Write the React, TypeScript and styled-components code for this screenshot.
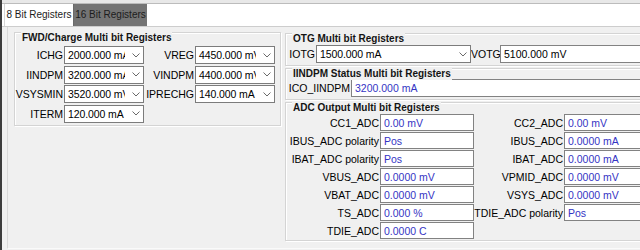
import { Fragment } from 'react';
import styled, { createGlobalStyle } from 'styled-components';

// --- Estilos ---
const GlobalStyle = createGlobalStyle`
  html, body {
    margin: 0;
    padding: 0;
    background: #f0f0f0;
  }
  body {
    font-family: "Liberation Sans", Arial, sans-serif;
  }
`;

const Window = styled.div`
  width: 640px;
  height: 250px;
  overflow: hidden;
  box-sizing: border-box;
  border-left: 2px solid #3c3c3c;
  background: #f0f0f0;
`;

const TopBar = styled.div`
  height: 3px;
  background: #e8e8e8;
  border-bottom: 1px solid #bcbcbc;
`;

const TabStrip = styled.div`
  display: flex;
  height: 22px;
  padding-left: 2px;
  background: #fff;
  border-bottom: 1px solid #cdcdcd;
`;

const Tab = styled.div<{ $dark?: boolean }>`
  width: ${({ $dark }) => ($dark ? '74px' : '69px')};
  box-sizing: border-box;
  border-left: 1px solid ${({ $dark }) => ($dark ? '#6a6a6a' : '#d6d6d6')};
  background: ${({ $dark }) => ($dark ? '#747474' : '#fff')};
  color: #1c1c1c;
  font-size: 10px;
  line-height: 22px;
  text-align: center;
  white-space: nowrap;
`;

const TabPage = styled.div`
  margin-left: 5px;
  height: 222px;
  box-sizing: border-box;
  border-left: 1px solid #d9d9d9;
  border-bottom: 1px solid #fafafa;
  padding: 5px 0 0 6px;
`;

const Columns = styled.div`
  display: flex;
  align-items: flex-start;
  gap: 4px;
`;

const RightColumn = styled.div`
  display: flex;
  flex-direction: column;
  gap: 2px;
  width: 374px;
  flex-shrink: 0;
  margin-top: 1px;
`;

const Group = styled.div<{ $width?: number; $pt: number; $pb: number }>`
  position: relative;
  flex-shrink: 0;
  width: ${({ $width }) => ($width ? `${$width}px` : 'auto')};
  box-sizing: border-box;
  border: 1px solid #d4d4d4;
  box-shadow: inset 1px 1px 0 #fff, 1px 1px 0 #fff;
  padding: ${({ $pt, $pb }) => `${$pt}px 0 ${$pb}px 0`};
`;

const GroupTitle = styled.div`
  position: absolute;
  top: -1px;
  left: 6px;
  padding: 0 1px;
  background: #f0f0f0;
  font-size: 10px;
  font-weight: bold;
  line-height: 12px;
  color: #141414;
  white-space: nowrap;
`;

const FieldGrid = styled.div<{ $cols: string; $rowGap: number; $rowH: number }>`
  display: grid;
  grid-template-columns: ${({ $cols }) => $cols};
  grid-auto-rows: ${({ $rowH }) => $rowH}px;
  row-gap: ${({ $rowGap }) => $rowGap}px;
`;

const Label = styled.div`
  text-align: right;
  padding-right: 1px;
  font-size: 10.5px;
  line-height: 18px;
  color: #000;
  white-space: nowrap;
  overflow: hidden;
`;

const Combo = styled.div`
  display: flex;
  align-items: center;
  box-sizing: border-box;
  border: 1px solid #7c7c7c;
  background: #fff;
  min-width: 0;
`;

const ComboText = styled.span`
  flex: 1;
  min-width: 0;
  overflow: hidden;
  white-space: nowrap;
  padding-left: 3px;
  margin-right: 4px;
  font-size: 10.5px;
  letter-spacing: -0.1px;
  color: #000;
`;

const ComboArrow = styled.span`
  display: flex;
  align-items: center;
  justify-content: center;
  width: 14px;
  flex-shrink: 0;
`;

const TextBox = styled.div<{ $blue?: boolean }>`
  box-sizing: border-box;
  border: 1px solid #828282;
  background: #fff;
  padding-left: 3px;
  font-size: 10.5px;
  display: flex;
  align-items: center;
  white-space: nowrap;
  overflow: hidden;
  color: ${({ $blue }) => ($blue ? '#3434c4' : '#000')};
`;

const Chevron = () => (
  <svg width="8" height="5" viewBox="0 0 8 5">
    <polyline points="0.5,0.5 4,4 7.5,0.5" fill="none" stroke="#6a6a6a" strokeWidth="1" />
  </svg>
);

const ComboBox = ({ value }: { value: string }) => (
  <Combo>
    <ComboText>{value}</ComboText>
    <ComboArrow>
      <Chevron />
    </ComboArrow>
  </Combo>
);

// --- Dados ---
const fwdRows: [string, string, string?, string?][] = [
  ['ICHG', '2000.000 mA', 'VREG', '4450.000 mV'],
  ['IINDPM', '3200.000 mA', 'VINDPM', '4400.000 mV'],
  ['VSYSMIN', '3520.000 mV', 'IPRECHG', '140.000 mA'],
  ['ITERM', '120.000 mA'],
];

const adcRows: [string, string, string?, string?][] = [
  ['CC1_ADC', '0.00 mV', 'CC2_ADC', '0.00 mV'],
  ['IBUS_ADC polarity', 'Pos', 'IBUS_ADC', '0.0000 mA'],
  ['IBAT_ADC polarity', 'Pos', 'IBAT_ADC', '0.0000 mA'],
  ['VBUS_ADC', '0.0000 mV', 'VPMID_ADC', '0.0000 mV'],
  ['VBAT_ADC', '0.0000 mV', 'VSYS_ADC', '0.0000 mV'],
  ['TS_ADC', '0.000 %', 'TDIE_ADC polarity', 'Pos'],
  ['TDIE_ADC', '0.0000 C'],
];

export default function App() {
  return (
    <>
      <GlobalStyle />
      <Window>
        <TopBar />
        <TabStrip>
          <Tab>8 Bit Registers</Tab>
          <Tab $dark>16 Bit Registers</Tab>
        </TabStrip>
        <TabPage>
          <Columns>
            <Group $width={267} $pt={13} $pb={2}>
              <GroupTitle>FWD/Charge Multi bit Registers</GroupTitle>
              <FieldGrid $cols="49px 80px 51px 80px" $rowGap={1.5} $rowH={18}>
                {fwdRows.map(([l1, v1, l2, v2]) => (
                  <Fragment key={l1}>
                    <Label>{l1}</Label>
                    <ComboBox value={v1} />
                    {l2 && <Label>{l2}</Label>}
                    {v2 && <ComboBox value={v2} />}
                  </Fragment>
                ))}
              </FieldGrid>
            </Group>

            <RightColumn>
              <Group $pt={11} $pb={2}>
                <GroupTitle>OTG Multi bit Registers</GroupTitle>
                <FieldGrid $cols="30px 155px 29px 1fr" $rowGap={0} $rowH={18}>
                  <Label>IOTG</Label>
                  <ComboBox value="1500.000 mA" />
                  <Label>VOTG</Label>
                  <TextBox>5100.000 mV</TextBox>
                </FieldGrid>
              </Group>

              <Group $pt={10} $pb={2}>
                <GroupTitle>IINDPM Status Multi bit Registers</GroupTitle>
                <FieldGrid $cols="65px 1fr" $rowGap={0} $rowH={18}>
                  <Label>ICO_IINDPM</Label>
                  <TextBox $blue>3200.000 mA</TextBox>
                </FieldGrid>
              </Group>

              <Group $pt={11} $pb={1}>
                <GroupTitle>ADC Output Multi bit Registers</GroupTitle>
                <FieldGrid $cols="94px 94px 90px 94px" $rowGap={1} $rowH={17}>
                  {adcRows.map(([l1, v1, l2, v2]) => (
                    <Fragment key={l1}>
                      <Label>{l1}</Label>
                      <TextBox $blue>{v1}</TextBox>
                      {l2 && <Label>{l2}</Label>}
                      {v2 && <TextBox $blue>{v2}</TextBox>}
                    </Fragment>
                  ))}
                </FieldGrid>
              </Group>
            </RightColumn>
          </Columns>
        </TabPage>
      </Window>
    </>
  );
}
